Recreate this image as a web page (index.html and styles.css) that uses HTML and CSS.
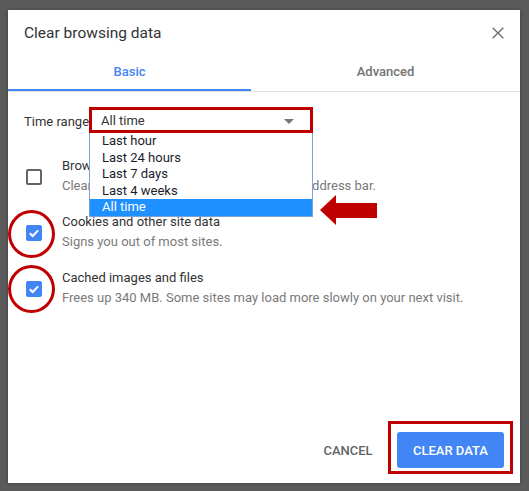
FILE: index.html
```html
<!DOCTYPE html>
<html lang="en">
<head>
<meta charset="utf-8">
<title>Clear browsing data</title>
<link rel="stylesheet" href="styles.css">
</head>
<body>
<div class="dialog">
  <div class="header">
    <h1 class="title">Clear browsing data</h1>
    <button class="close" aria-label="Close">
      <svg width="12" height="12" viewBox="0 0 12 12"><path d="M0.7 0.7L11.3 11.3M11.3 0.7L0.7 11.3" stroke="#6e6e6e" stroke-width="1.4" fill="none"/></svg>
    </button>
  </div>
  <div class="tabs">
    <div class="tab tab-basic active">Basic</div>
    <div class="tab tab-advanced">Advanced</div>
  </div>
  <div class="content">
    <div class="range-row">
      <span class="range-label">Time range</span>
      <div class="select">
        <span class="select-value">All time</span>
        <span class="select-arrow"></span>
      </div>
    </div>
    <div class="options">
      <div class="option">
        <span class="checkbox"></span>
        <div class="option-text">
          <div class="option-title">Browsing history</div>
          <div class="option-desc">Clears history and autocompletions in the address bar.</div>
        </div>
      </div>
      <div class="option">
        <span class="checkbox checked"><svg width="16" height="16" viewBox="0 0 16 16"><path d="M3.8 8.2L6.6 11L12.2 5.4" stroke="#fff" stroke-width="2" fill="none"/></svg></span>
        <div class="option-text">
          <div class="option-title">Cookies and other site data</div>
          <div class="option-desc">Signs you out of most sites.</div>
        </div>
      </div>
      <div class="option">
        <span class="checkbox checked"><svg width="16" height="16" viewBox="0 0 16 16"><path d="M3.8 8.2L6.6 11L12.2 5.4" stroke="#fff" stroke-width="2" fill="none"/></svg></span>
        <div class="option-text">
          <div class="option-title">Cached images and files</div>
          <div class="option-desc">Frees up 340 MB. Some sites may load more slowly on your next visit.</div>
        </div>
      </div>
    </div>
  </div>
  <div class="footer">
    <button class="btn btn-cancel">CANCEL</button>
    <button class="btn btn-primary">CLEAR DATA</button>
  </div>

  <ul class="dropdown">
    <li>Last hour</li>
    <li>Last 24 hours</li>
    <li>Last 7 days</li>
    <li>Last 4 weeks</li>
    <li class="selected">All time</li>
  </ul>
  <div class="mark mark-select"></div>
  <div class="mark-circle circle-cookies"></div>
  <div class="mark-circle circle-cache"></div>
  <svg class="mark-arrow" width="57" height="30" viewBox="0 0 57 30"><polygon points="0,15 16,0 16,8 57,8 57,23 16,23 16,30" fill="#c00000"/></svg>
  <div class="mark mark-button"></div>
</div>
</body>
</html>
```

FILE: styles.css
```css
html, body {
  margin: 0;
  padding: 0;
}
body {
  background: #5a5a5a;
  width: 529px;
  height: 491px;
  overflow: hidden;
  font-family: Roboto, "Liberation Sans", sans-serif;
  padding-top: 10px;
  box-sizing: border-box;
}
.dialog {
  position: relative;
  margin-left: 8px;
  width: 512px;
  height: 473px;
  background: #fff;
  box-shadow: 0 0 3px rgba(0, 0, 0, 0.35);
  display: flex;
  flex-direction: column;
  box-sizing: border-box;
}
.header {
  display: flex;
  align-items: center;
  justify-content: space-between;
  padding: 13px 16px 0 16px;
  height: 20px;
  margin-bottom: 9px;
}
.title {
  margin: 0;
  font-size: 15.5px;
  font-weight: 400;
  line-height: 20px;
  color: #333;
}
.close {
  border: 0;
  background: none;
  padding: 0;
  width: 12px;
  height: 12px;
  display: flex;
}
.tabs {
  display: flex;
  border-bottom: 1px solid #e0e0e0;
}
.tab {
  position: relative;
  height: 39px;
  display: flex;
  align-items: center;
  justify-content: center;
  font-size: 13px;
  font-weight: 500;
  line-height: 20px;
  color: #737373;
}
.tab-basic { width: 243px; }
.tab-advanced { width: 269px; }
.tab.active { color: #4285f4; }
.tab.active::after {
  content: "";
  position: absolute;
  left: 0;
  right: 0;
  bottom: 0;
  height: 2px;
  background: #4285f4;
}
.content {
  padding: 17px 16px 0 16px;
}
.range-row {
  display: flex;
  align-items: center;
  height: 24px;
  font-size: 13px;
  color: #333;
}
.range-label {
  width: 68px;
  white-space: nowrap;
  overflow: hidden;
}
.select {
  position: relative;
  width: 208px;
  height: 24px;
  box-sizing: border-box;
  border-bottom: 1px solid #4a6fb0;
  padding-left: 9px;
  display: flex;
  align-items: center;
  color: #333;
}
.select-arrow {
  position: absolute;
  right: 6px;
  top: 10px;
  width: 0;
  height: 0;
  border-left: 5px solid transparent;
  border-right: 5px solid transparent;
  border-top: 5px solid #777;
}
.options {
  margin-top: 23px;
  display: flex;
  flex-direction: column;
  gap: 16px;
}
.option {
  display: flex;
  align-items: center;
}
.checkbox {
  width: 16px;
  height: 16px;
  margin-left: 2px;
  margin-right: 20px;
  box-sizing: border-box;
  border: 2px solid #646464;
  border-radius: 2px;
  flex: none;
  position: relative;
  top: 1px;
}
.checkbox.checked {
  border: 0;
  background: #4285f4;
  display: flex;
}
.option-text {
  font-size: 13px;
  line-height: 20px;
}
.option-title { color: #333; }
.option-desc { color: #7a7a7a; }
.footer {
  margin-top: auto;
  display: flex;
  justify-content: flex-end;
  align-items: center;
  gap: 9px;
  padding: 0 16px 15px 0;
}
.btn {
  border: 0;
  font-family: Roboto, "Liberation Sans", sans-serif;
  font-size: 13px;
  font-weight: 500;
  height: 36px;
  border-radius: 3px;
  padding: 0;
}
.btn-cancel {
  width: 80px;
  background: none;
  color: #646464;
}
.btn-primary {
  width: 107px;
  background: #4285f4;
  color: #fff;
}
.dropdown {
  position: absolute;
  left: 81px;
  top: 122px;
  width: 224px;
  margin: 0;
  padding: 0;
  list-style: none;
  box-sizing: border-box;
  border: 1px solid #7ba0dc;
  background: #fff;
  font-size: 13px;
  color: #1c1c2c;
}
.dropdown li {
  height: 16.6px;
  line-height: 16.6px;
  padding-left: 12px;
}
.dropdown li.selected {
  background: #1e90ff;
  color: #fff;
}
.mark {
  position: absolute;
  box-sizing: border-box;
  border: 3px solid #c00000;
}
.mark-select {
  left: 81px;
  top: 97px;
  width: 224px;
  height: 26px;
}
.mark-button {
  left: 380px;
  top: 411px;
  width: 125px;
  height: 53px;
}
.mark-circle {
  position: absolute;
  box-sizing: border-box;
  left: 0;
  width: 47px;
  height: 48px;
  border: 3px solid #c00000;
  border-radius: 50%;
}
.circle-cookies { top: 200px; }
.circle-cache { top: 255px; }
.mark-arrow {
  position: absolute;
  left: 312px;
  top: 185px;
}
```
